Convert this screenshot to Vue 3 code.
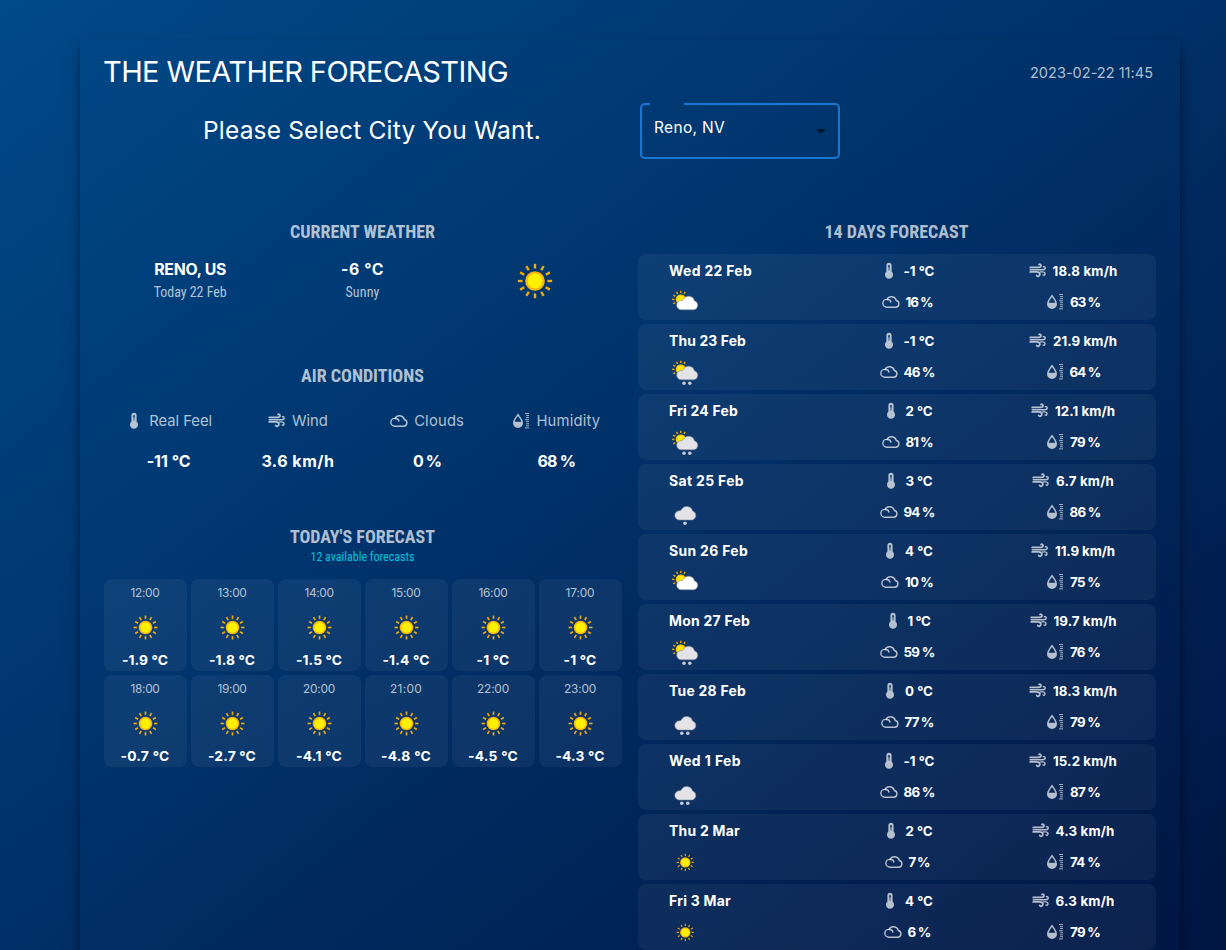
<script setup>
import { h } from 'vue'

// Sets the tracking of a text run so that it fills the given width.
const vFit = {
  mounted(el, { value }) {
    const width = el.getBoundingClientRect().width
    const count = el.textContent.length
    el.style.letterSpacing = (value - width) / count + 'px'
  },
}

const Glyph = ({ name }) => {
  const shapes = {
    temp: [
      h('path', { fill: 'currentColor', 'fill-rule': 'evenodd', d: 'M6.4 3.4a2.6 2.6 0 0 1 5.2 0v6.2a4 4 0 1 1-5.2 0zM8.2 3.8v5h1.6v-5a.8.8 0 0 0-1.6 0z' }),
      h('path', { stroke: 'currentColor', 'stroke-width': 1, d: 'M9 5.4v4' }),
    ],
    wind: [
      h('g', { fill: 'none', stroke: 'currentColor', 'stroke-width': 1.4, 'stroke-linecap': 'round' }, [
        h('path', { 'stroke-width': 1.7, d: 'M1.2 5.4h8.5c1.5 0 2.3-.7 2.3-1.8S11 1.8 10 2.5' }),
        h('path', { 'stroke-width': 1.7, d: 'M1.2 9.9h6.5c2.2 0 3.2.8 3.2 2.4S8.5 15.2 7.6 13.4' }),
        h('path', { d: 'M1.2 7.7h12.3c1.7 0 2.7-.6 2.7-1.8 0-1-.8-1.5-1.8-1.2M11.6 9.9h1.9c1.6 0 2.5.7 2.5 1.9s-1 1.8-1.9 1.2' }),
      ]),
    ],
    cloud: [
      h('g', { fill: 'none', stroke: 'currentColor', 'stroke-width': 1.4, 'stroke-linecap': 'round' }, [
        h('path', { d: 'M4.5 14.2h9.2a3.4 3.4 0 0 0 .6-6.7A5 5 0 0 0 5 6.4a3.9 3.9 0 0 0-.5 7.8z' }),
        h('path', { d: 'M5 6.5c2.2-.2 3.6.8 3.9 2.6' }),
      ]),
    ],
    drop: [
      h('path', { fill: 'currentColor', 'fill-rule': 'evenodd', d: 'M6 1.5C8 4.6 11 7.8 11 11a5 5 0 0 1-10 0c0-3.2 3-6.4 5-9.5zM6 4C4.6 6.3 3 8 2.7 9.8h6.6C9 8 7.4 6.3 6 4z' }),
      h('path', { fill: 'none', stroke: 'currentColor', 'stroke-width': 0.9, d: 'M13 1.5h4M14 3.6h3M14 5.6h3M13 7.7h4M14 9.7h3M14 11.8h3M14 13.8h3M13 15.9h4' }),
    ],
  }
  return h('svg', { viewBox: '0 0 18 18', width: 18, height: 18 }, shapes[name])
}

const Sun = ({ size }) =>
  h('svg', { viewBox: '-18 -18 36 36', width: size, height: size }, [
    ...Array.from({ length: 12 }, (_, i) =>
      h('path', { d: 'M0-12.4v-4.8', stroke: '#f2aa0c', 'stroke-width': 2.4, transform: `rotate(${i * 30})` })
    ),
    h('circle', { r: 9.8, fill: '#fdb50b' }),
    h('circle', { r: 7.4, fill: '#fdf000' }),
  ])

const cloudPath = 'M9.5 21.8a4.6 4.6 0 0 1-.3-9.2c.9-.1 1.6-.3 2.2-1a6 6 0 0 1 11.2 1.2 4.7 4.7 0 0 1-.2 9z'
const Weather = ({ kind }) => {
  if (kind === 'sun') {
    return h('svg', { viewBox: '0 0 28 28', width: 28, height: 28 }, [
      h('g', { transform: 'translate(14.3 14.4)' }, [
        ...Array.from({ length: 12 }, (_, i) =>
          h('path', { d: 'M0-6.3v-2.3', stroke: '#e0a010', 'stroke-width': 1.2, transform: `rotate(${i * 30})` })
        ),
        h('circle', { r: 5.2, fill: '#f9b312' }),
        h('circle', { r: 3.9, fill: '#fdf000' }),
      ]),
    ])
  }
  const sunny = kind === 'partly' || kind === 'partlysnow'
  const fill = kind === 'partly' ? '#ffffff' : '#e4e4e8'
  const parts = []
  if (sunny) {
    parts.push(
      h('g', { transform: 'translate(9.8 11.4)' }, [
        ...[-120, -90, -60, -30, 0, 30].map((a) =>
          h('path', { d: 'M0-6.3v-2.4', stroke: '#dfa40e', 'stroke-width': 1.5, transform: `rotate(${a})` })
        ),
        h('circle', { r: 5, fill: '#fbbb10' }),
        h('circle', { r: 4, fill: '#fdea00' }),
      ])
    )
  }
  const move = sunny ? 'translate(.9 0)' : 'translate(-1 .2)'
  parts.push(h('path', { d: cloudPath, fill, stroke: '#7c8795', 'stroke-width': 0.6, transform: move }))
  const dots = { partlysnow: [13, 18.8], snow: [10.8, 16.8], flake: [14] }[kind] || []
  dots.forEach((x) => parts.push(h('circle', { cx: x, cy: 25.3, r: 1.8, fill: '#c3cad6' })))
  return h('svg', { viewBox: '0 0 28 28', width: 28, height: 28 }, parts)
}

const conditions = [
  ['temp', 'Real Feel', 63, '-11 °C', 44],
  ['wind', 'Wind', 36, '3.6 km/h', 73],
  ['cloud', 'Clouds', 50, '0 %', 28],
  ['drop', 'Humidity', 64, '68 %', 38],
]

const hours = [
  ['12:00', '-1.9', 46], ['13:00', '-1.8', 46], ['14:00', '-1.5', 46],
  ['15:00', '-1.4', 47], ['16:00', '-1', 33], ['17:00', '-1', 33],
  ['18:00', '-0.7', 49], ['19:00', '-2.7', 48], ['20:00', '-4.1', 46],
  ['21:00', '-4.8', 50], ['22:00', '-4.5', 50], ['23:00', '-4.3', 49],
]

const days = [
  ['Wed 22 Feb', 83, 'partly', '-1', 31, 18.8, 65, 16, 27, 63, 30],
  ['Thu 23 Feb', 77, 'partlysnow', '-1', 31, 21.9, 64, 46, 31, 64, 31],
  ['Fri 24 Feb', 69, 'partlysnow', '2', 27, 12.1, 60, 81, 27, 79, 30],
  ['Sat 25 Feb', 75, 'flake', '3', 27, 6.7, 58, 94, 31, 86, 31],
  ['Sun 26 Feb', 79, 'partly', '4', 28, 11.9, 60, 10, 28, 75, 30],
  ['Mon 27 Feb', 81, 'partlysnow', '1', 23, 19.7, 63, 59, 31, 76, 30],
  ['Tue 28 Feb', 77, 'snow', '0', 28, 18.3, 64, 77, 29, 79, 30],
  ['Wed 1 Feb', 72, 'snow', '-1', 31, 15.2, 64, 86, 31, 87, 30],
  ['Thu 2 Mar', 71, 'sun', '2', 27, 4.3, 59, 7, 21, 74, 30],
  ['Fri 3 Mar', 62, 'sun', '4', 28, 6.3, 59, 6, 23, 79, 30],
]
</script>

<template>
  <div class="page">
    <main class="panel">
      <header class="top">
        <h1><span v-fit="405">THE WEATHER FORECASTING</span></h1>
        <time><span v-fit="123">2023-02-22 11:45</span></time>
      </header>
      <div class="picker">
        <h2><span v-fit="338">Please Select City You Want.</span></h2>
        <div class="select">
          <svg class="outline" width="200" height="56" viewBox="0 0 200 56">
            <path d="M10 1H5a4 4 0 0 0-4 4v46a4 4 0 0 0 4 4h190a4 4 0 0 0 4-4V5a4 4 0 0 0-4-4H44" />
          </svg>
          <span v-fit="71">Reno, NV</span>
          <svg class="arrow" width="10" height="5"><path d="M0 0h10l-5 5z" /></svg>
        </div>
      </div>
      <div class="columns">
        <section class="left">
          <h3><span v-fit="145">CURRENT WEATHER</span></h3>
          <div class="current">
            <div>
              <b><span v-fit="72">RENO, US</span></b>
              <small><span v-fit="73">Today 22 Feb</span></small>
            </div>
            <div>
              <b><span v-fit="43">-6 °C</span></b>
              <small><span v-fit="34">Sunny</span></small>
            </div>
            <div class="big"><Sun :size="36" /></div>
          </div>
          <h3 class="air"><span v-fit="123">AIR CONDITIONS</span></h3>
          <div class="conditions">
            <div v-for="c in conditions" :key="c[0]">
              <p class="label"><Glyph :name="c[0]" /><span v-fit="c[2]">{{ c[1] }}</span></p>
              <p class="value"><span v-fit="c[4]">{{ c[3] }}</span></p>
            </div>
          </div>
          <h3 class="today"><span v-fit="145">TODAY'S FORECAST</span></h3>
          <p class="count"><span v-fit="104">12 available forecasts</span></p>
          <div class="hours">
            <article v-for="t in hours" :key="t[0]">
              <span class="hour"><span v-fit="+t[0].slice(0, 2) < 20 ? 29 : 32">{{ t[0] }}</span></span>
              <Sun :size="25" />
              <strong><span v-fit="t[2]">{{ t[1] }} °C</span></strong>
            </article>
          </div>
        </section>
        <section class="right">
          <h3><span v-fit="144">14 DAYS FORECAST</span></h3>
          <div class="days">
            <article v-for="d in days" :key="d[0]">
              <div class="day">
                <b><span v-fit="d[1]">{{ d[0] }}</span></b>
                <Weather :kind="d[2]" />
              </div>
              <div class="metric">
                <p><Glyph name="temp" /><span v-fit="d[4]">{{ d[3] }} °C</span></p>
                <p><Glyph name="cloud" /><span v-fit="d[8]">{{ d[7] }} %</span></p>
              </div>
              <div class="metric">
                <p><Glyph name="wind" /><span v-fit="d[6]">{{ d[5] }} km/h</span></p>
                <p><Glyph name="drop" /><span v-fit="d[10]">{{ d[9] }} %</span></p>
              </div>
            </article>
          </div>
        </section>
      </div>
    </main>
  </div>
</template>

<style>
html, body { margin: 0; overflow: hidden; }
</style>

<style scoped>
.page {
  box-sizing: border-box;
  height: 950px;
  padding: 40px 46px 0 80px;
  overflow: hidden;
  background: linear-gradient(to bottom right, #004a89, #003067 50%, #001542);
  font-family: Inter, sans-serif;
  color: #fff;
}
h1, h2, h3, p { margin: 0; font-weight: 400; }
span { white-space: nowrap; }
svg { display: block; flex: none; }
.panel {
  box-sizing: border-box;
  width: 1100px;
  height: 1300px;
  padding: 7px 24px 0;
  box-shadow: rgba(0, 0, 0, 0.5) 0 10px 15px -3px, rgba(0, 0, 0, 0.5) 0 4px 6px -2px;
}
.top { display: flex; justify-content: space-between; align-items: center; height: 48px; padding-right: 3px; }
h1 { margin-left: -1px; font-size: 29px; }
time { margin-top: 2px; font-size: 14.5px; color: rgba(255, 255, 255, 0.7); }
.picker { display: flex; height: 56px; margin-top: 8px; align-items: center; }
h2 { width: 536px; margin-top: -2px; text-align: center; font-size: 24.5px; }
.select { position: relative; box-sizing: border-box; width: 200px; height: 56px; padding: 15px 14px; font-size: 15.5px; line-height: 19px; }
.outline { position: absolute; inset: 0; }
.outline path { fill: none; stroke: #1976d2; stroke-width: 2; }
.arrow { position: absolute; left: 176px; top: 26px; }
.arrow path { fill: rgba(0, 0, 0, 0.54); }
.columns { display: flex; gap: 16px; margin-top: 62px; }
.left, .right { width: 518px; }
h3 {
  height: 22px;
  padding-right: 1px;
  line-height: 22px;
  text-align: center;
  font-family: Roboto, sans-serif;
  font-stretch: 75%;
  font-size: 18px;
  font-weight: 700;
  color: rgba(255, 255, 255, 0.7);
}
.current { display: grid; grid-template-columns: repeat(3, 1fr); height: 60px; margin-top: 15px; padding-right: 1px; text-align: center; }
.current b { display: block; font-size: 15.8px; font-weight: 650; line-height: 24px; }
.current small { display: block; margin-top: -1px; font-family: Roboto, sans-serif; font-stretch: 75%; font-size: 14px; line-height: 22px; color: rgba(255, 255, 255, 0.7); }
.big { display: flex; justify-content: center; padding-top: 5px; }
.air { margin-top: 47px; }
.conditions { display: grid; grid-template-columns: repeat(4, 1fr); margin-top: 22px; padding-right: 1px; text-align: center; }
.label { display: flex; justify-content: center; align-items: center; gap: 6px; height: 24px; font-size: 14.8px; color: rgba(255, 255, 255, 0.7); }
.value { margin-top: 16px; font-size: 16px; line-height: 24px; font-weight: 650; }
.today { margin-top: 53px; }
.count { height: 18px; padding-right: 1px; line-height: 18px; text-align: center; font-family: Roboto, sans-serif; font-stretch: 75%; font-size: 12px; color: #04c4dc; }
.hours { display: grid; grid-template-columns: repeat(6, 83px); gap: 4px; margin-top: 13px; }
.hours article { display: flex; flex-direction: column; align-items: center; box-sizing: border-box; height: 92px; padding-right: 1px; border-radius: 8px; background: rgba(255, 255, 255, 0.05); }
.hour { height: 28px; margin-bottom: 8px; line-height: 28px; font-size: 11.9px; color: rgba(255, 255, 255, 0.7); }
.hours strong { margin-top: 10px; font-size: 13.8px; line-height: 20px; font-weight: 680; }
.days { display: flex; flex-direction: column; gap: 4px; margin-top: 11px; }
.days article { display: grid; grid-template-columns: 155px 166px 166px; box-sizing: border-box; height: 66px; padding-left: 31px; border-radius: 8px; background: rgba(255, 255, 255, 0.05); }
.day b { display: block; height: 34px; line-height: 34px; font-size: 13.9px; font-weight: 660; }
.day svg { margin: 0 0 0 2px; }
.metric p { display: flex; justify-content: center; align-items: center; gap: 6px; height: 34px; font-size: 13.3px; font-weight: 670; }
.metric p + p { height: 28px; }
.metric svg { color: rgba(255, 255, 255, 0.7); }
</style>
